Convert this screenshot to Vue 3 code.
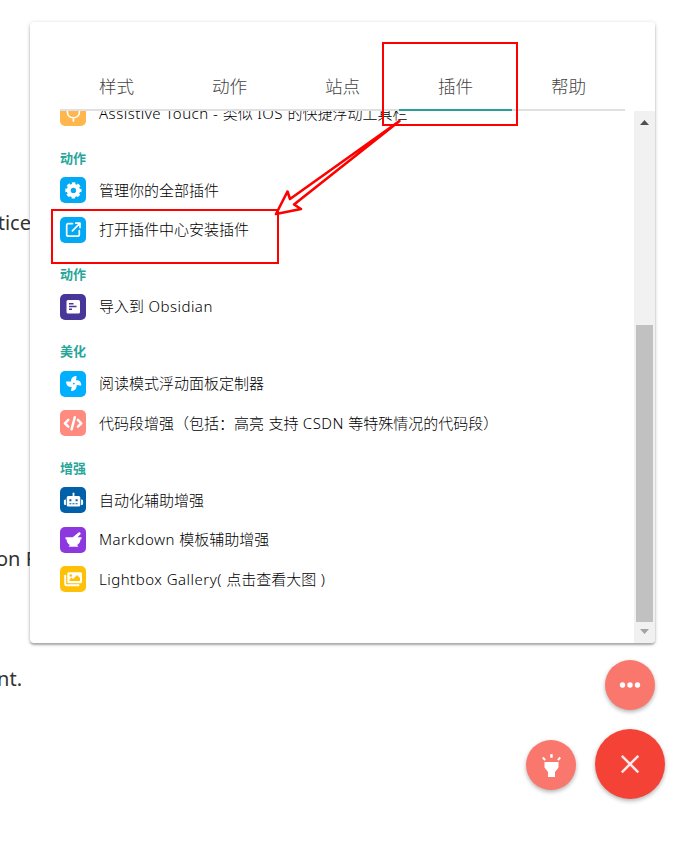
<script setup>
const tabs = ['样式', '动作', '站点', '插件', '帮助']
const activeTab = '插件'
const groups = [
  { title: '', items: [{ icon: 'touch', color: '#ffb74d', text: 'Assistive Touch - 类似 IOS 的快捷浮动工具栏' }] },
  { title: '动作', items: [
    { icon: 'gear', color: '#03a9f4', text: '管理你的全部插件' },
    { icon: 'open', color: '#03a9f4', text: '打开插件中心安装插件' },
  ] },
  { title: '动作', items: [{ icon: 'note', color: '#483699', text: '导入到 Obsidian' }] },
  { title: '美化', items: [
    { icon: 'fan', color: '#00b0ff', text: '阅读模式浮动面板定制器' },
    { icon: 'code', color: '#ff8a80', text: '代码段增强（包括：高亮 支持 CSDN 等特殊情况的代码段）' },
  ] },
  { title: '增强', items: [
    { icon: 'robot', color: '#0060a8', text: '自动化辅助增强' },
    { icon: 'mortar', color: '#8d37df', text: 'Markdown 模板辅助增强' },
    { icon: 'images', color: '#ffc107', text: 'Lightbox Gallery( 点击查看大图 )' },
  ] },
]
// Splits a label into Latin and CJK runs, which are spaced differently.
const runs = (text) => text.match(/[\x00-\x7f]+|[^\x00-\x7f]+/g).map((t) => ({ t, latin: t.charCodeAt(0) < 128 }))
</script>

<template>
  <div class="page">
    <span class="behind one">tice</span>
    <span class="behind two">on F</span>
    <span class="behind three">nt.</span>

    <section class="panel">
      <nav class="tabs">
        <div v-for="t in tabs" :key="t" class="tab" :class="{ active: t === activeTab }">{{ t }}</div>
      </nav>
      <div class="body">
        <div class="list">
          <div v-for="(g, i) in groups" :key="i" class="group">
            <h4 v-if="g.title" class="title">{{ g.title }}</h4>
            <div v-for="item in g.items" :key="item.text" class="row">
              <span class="icon" :style="{ background: item.color }">
                <svg viewBox="0 0 26 26" width="26" height="26" fill="none" stroke="#fff">
                  <g v-if="item.icon === 'touch'" stroke-width="1.6">
                    <path d="M7.400 9v3c0 3.500 2.500 5.800 6 5.800s6-2.300 6-5.800V9M13.400 17.800v4" />
                  </g>
                  <g v-else-if="item.icon === 'gear'">
                    <circle cx="13.4" cy="13.4" r="4.7" stroke-width="4" />
                    <circle cx="13.4" cy="13.4" r="7" stroke-width="2.200" stroke-dasharray="3.4 2.098" stroke-dashoffset="1.7" />
                  </g>
                  <g v-else-if="item.icon === 'open'" stroke-width="1.7" stroke-linecap="round" stroke-linejoin="round">
                    <path d="M12.500 6.600H8a1.300 1.300 0 0 0-1.300 1.300v10A1.300 1.300 0 0 0 8 19.200h10a1.300 1.300 0 0 0 1.300-1.300v-4.400M15.700 6.200h4.300v4.300M19.800 6.400l-7.400 7.400" />
                  </g>
                  <g v-else-if="item.icon === 'note'">
                    <rect x="6.500" y="6" width="13.500" height="13.500" rx="1.500" fill="#fff" stroke="none" />
                    <path d="M9 9.700h4.500M9 12.500h7.500M9 15.300h3" stroke="#483699" stroke-width="1.400" />
                  </g>
                  <g v-else-if="item.icon === 'fan'" fill="#fff" stroke="none">
                    <path fill-rule="evenodd" d="M11.200 10.600C10.800 8 12.200 5.300 15.700 5C16.500 5 16.700 5.500 16.500 6.200L16 9.300C18.600 8.900 21 10.300 21.300 13.700C21.300 14.500 20.800 14.800 20.100 14.600L16.600 14.100C17 17 15.400 19.800 12 20.100C11.200 20.100 10.900 19.600 11.100 18.900L11.700 15.900C9 16.200 6.400 14.800 6.100 11.400C6.100 10.600 6.600 10.200 7.300 10.400Z M13.800 11.700a.9.900 0 1 0 0 1.800a.9.900 0 1 0 0-1.800Z" />
                  </g>
                  <g v-else-if="item.icon === 'code'" stroke-linejoin="round" stroke-linecap="round" stroke-width="2.500">
                    <path d="M8.300 9.900L4.900 13.300l3.400 3.400M17.900 9.900l3.400 3.400-3.400 3.400M14.800 7.300l-3.200 12" />
                  </g>
                  <g v-else-if="item.icon === 'robot'" fill="#fff" stroke="none">
                    <path d="M12.600 5.700h1.800v3.200h4.300a1.600 1.600 0 0 1 1.600 1.600V18a1.600 1.600 0 0 1-1.600 1.600h-10.400A1.600 1.600 0 0 1 6.700 18v-7.500A1.600 1.600 0 0 1 8.300 8.900h4.300zM5.900 12.500V18c-1.400 0-2-.5-2-1.500V14c0-1 .6-1.500 2-1.500zM21.100 12.500V18c1.400 0 2-.5 2-1.500V14c0-1-.6-1.500-2-1.500z" />
                    <path d="M9.400 12.200h2v2h-2zM15.600 12.200h2v2h-2zM9.400 16.300h2v1h-2zM12.500 16.300h2v1h-2zM15.600 16.300h2v1h-2z" fill="#0060a8" />
                  </g>
                  <g v-else-if="item.icon === 'mortar'" fill="#fff" stroke="none">
                    <path d="M5.500 10.300h7.200l5.900-4.900c1.200-.7 2.700.6 1.900 1.800l-3 3.100h4v2h-1c0 2.700-1.500 4.500-3.300 5.600l1.100 1.900H8.700l1.100-1.900C8 16.800 6.500 15 6.500 12.300h-1z" />
                  </g>
                  <g v-else>
                    <rect x="7.300" y="6.300" width="14.700" height="10.900" rx="1.500" fill="#fff" stroke="none" />
                    <path d="M5.200 9v9c0 .8.500 1.300 1.300 1.300h12.800" stroke-width="1.900" />
                    <circle cx="10.800" cy="9.500" r="1.300" fill="#ffc107" stroke="none" />
                    <path d="M9.500 15v-1.500l2-2 1.500 1.500 4-4 3 3v3z" fill="#ffc107" stroke="none" />
                  </g>
                </svg>
              </span>
              <span class="label"><span v-for="(r, k) in runs(item.text)" :key="k" :class="{ latin: r.latin }">{{ r.t }}</span></span>
            </div>
          </div>
        </div>
        <div class="scrollbar">
          <svg class="arrow-up" width="9" height="5" viewBox="0 0 9 5"><path d="M0 5L4.500 0L9 5z" fill="#505050" /></svg>
          <div class="thumb"></div>
          <svg class="arrow-down" width="9" height="5" viewBox="0 0 9 5"><path d="M0 0L4.500 5L9 0z" fill="#a3a3a3" /></svg>
        </div>
      </div>
    </section>

    <button class="fab more">
      <svg width="50" height="50" viewBox="0 0 50 50" fill="#fff"><circle cx="17.500" cy="25" r="2.700" /><circle cx="25" cy="25" r="2.700" /><circle cx="32.500" cy="25" r="2.700" /></svg>
    </button>
    <button class="fab torch">
      <svg width="50" height="50" viewBox="0 0 50 50" fill="#fff">
        <path d="M18.500 22h14v5.500l-3.500 4.500v5h-7v-5l-3.500-4.500zM24.200 14.200h2.500v3.500h-2.500z" />
        <path d="M16.800 17.500l2.300 2.700M34.200 17.500l-2.300 2.700" stroke="#fff" stroke-width="2" />
      </svg>
    </button>
    <button class="fab close">
      <svg width="70" height="70" viewBox="0 0 70 70" stroke="#ffe9e7" stroke-width="2.500"><path d="M26.800 26.800l16.500 16.500M43.300 26.800L26.800 43.300" /></svg>
    </button>

    <div class="mark mark-tab"></div>
    <div class="mark mark-row"></div>
    <svg class="mark-arrow" width="694" height="842" viewBox="0 0 694 842" fill="none" stroke="#f00" stroke-width="2.600" stroke-linejoin="round">
      <path d="M399.500 121L290 199L287.500 191.500L276 214L301 209L294 204.500Z" />
    </svg>
  </div>
</template>

<style>
body { margin: 0; background: #fff; overflow: hidden; }
</style>

<style scoped>
.page { position: relative; width: 694px; height: 842px; padding: 22px 0 0 30px; box-sizing: border-box; overflow: hidden; font-family: "Noto Sans", "Noto Sans CJK SC", sans-serif; }
.behind { position: absolute; font-size: 20px; line-height: 28px; color: #333; white-space: pre; }
.one { right: 663px; top: 209px; }
.two { left: -4px; top: 545px; }
.three { right: 672px; top: 665px; }
.panel { position: relative; width: 625px; height: 621px; border-radius: 4px; background: #fff; overflow: hidden; display: flex; flex-direction: column; box-shadow: 0 2px 2px rgba(0, 0, 0, .24), 0 1px 4px rgba(0, 0, 0, .2); }
.tabs { display: flex; margin: 41px 30px 0; height: 48px; flex: none; box-sizing: border-box; }
.tab { flex: 1; box-sizing: border-box; border-bottom: 2px solid #e0e0e0; text-align: center; font-size: 17.600px; line-height: 47px; font-weight: 300; color: #444; }
.tab.active { border-bottom-color: #2a9f93; }
.body { display: flex; flex: 1; min-height: 0; }
.list { flex: 1; min-width: 0; overflow: hidden; padding-left: 30px; }
.group:first-child { margin-top: -17.750px; }
.title { margin: 0; box-sizing: border-box; height: 37.500px; padding-top: 13px; font-size: 13px; line-height: 24px; font-weight: 700; color: #26a69a; }
.row { display: flex; align-items: center; height: 39.500px; gap: 13px; }
.icon { width: 26px; height: 26px; border-radius: 5px; flex: none; }
.icon svg { display: block; }
.label { font-size: 15px; line-height: 24px; padding-bottom: 1px; font-weight: 300; color: #000; white-space: pre; }
.latin { letter-spacing: .49px; }
.scrollbar { width: 21px; background: #f1f1f1; display: flex; flex-direction: column; align-items: center; }
.arrow-up { margin-top: 9px; flex: none; }
.thumb { margin-top: 200px; width: 17px; height: 297px; background: #c1c1c1; flex: none; }
.arrow-down { margin-top: 7px; flex: none; }
.fab { position: absolute; padding: 0; border: 0; border-radius: 50%; box-shadow: 0 2px 4px rgba(0, 0, 0, .3); }
.fab svg { display: block; }
.more, .torch { width: 50px; height: 50px; background: #f9776d; }
.more { left: 605px; top: 660px; }
.torch { left: 526px; top: 740px; }
.close { left: 595px; top: 729px; width: 70px; height: 70px; background: #f44336; }
.mark { position: absolute; border: 2px solid #f00; box-sizing: border-box; }
.mark-tab { left: 382px; top: 42px; width: 136px; height: 84px; }
.mark-row { left: 51px; top: 209px; width: 228px; height: 55px; }
.mark-arrow { position: absolute; left: 0; top: 0; pointer-events: none; }
</style>
